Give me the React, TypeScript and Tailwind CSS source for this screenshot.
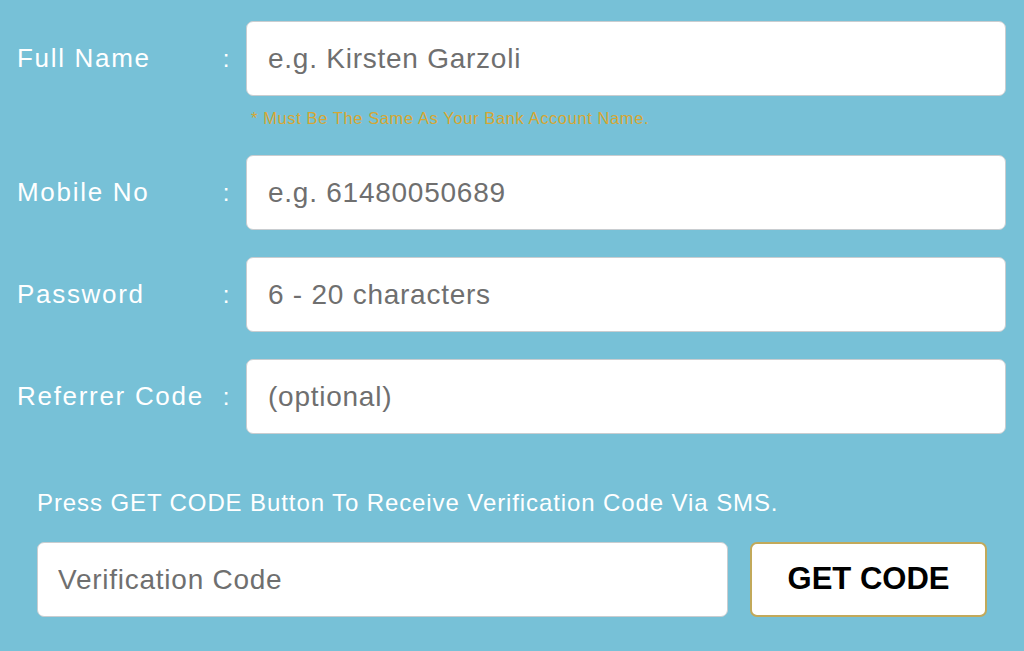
const fields = [
  { label: 'Full Name', placeholder: 'e.g. Kirsten Garzoli', hint: '* Must Be The Same As Your Bank Account Name.' },
  { label: 'Mobile No', placeholder: 'e.g. 61480050689' },
  { label: 'Password', placeholder: '6 - 20 characters' },
  { label: 'Referrer Code', placeholder: '(optional)' },
];

export default function App() {
  return (
    <div className="w-[1024px] h-[651px] bg-[#77c1d7] overflow-hidden font-['Liberation_Sans',Arial,sans-serif]">
      <div className="pt-[21px] pr-[18px] flex flex-col">
        {fields.map((f, i) => (
          <div key={f.label} className={i === 0 ? '' : 'mt-[27px]'}>
            <div className="flex items-center">
              <div className="w-[246px] shrink-0 flex items-center pl-[17px] pr-[15px] text-[26px] text-white tracking-[1.7px]">
                <span className="flex-1">{f.label}</span>
                <span className="text-[24px]">:</span>
              </div>
              <input
                placeholder={f.placeholder}
                className="flex-1 h-[75px] bg-white rounded-[7px] border border-[#c9cdd0] px-[21px] text-[28px] tracking-[0.75px] text-[#333] placeholder:text-[#6f6f6f] outline-none"
              />
            </div>
            {f.hint && (
              <p className="ml-[251px] mt-[12px] text-[16.5px] leading-[20px] tracking-[0.6px] text-[#d6a733]">{f.hint}</p>
            )}
          </div>
        ))}
      </div>

      <div className="px-[37px] mt-[55px]">
        <p className="text-[24px] leading-[28px] text-white tracking-[0.9px]">
          Press GET CODE Button To Receive Verification Code Via SMS.
        </p>
        <div className="flex gap-[22px] mt-[25px]">
          <input
            placeholder="Verification Code"
            className="w-[691px] h-[75px] bg-white rounded-[7px] border border-[#c9cdd0] px-[20px] text-[28px] tracking-[0.75px] text-[#333] placeholder:text-[#6f6f6f] outline-none"
          />
          <button className="w-[237px] h-[75px] bg-white rounded-[7px] border-2 border-[#c2a95a] text-[31px] font-bold text-black">
            GET CODE
          </button>
        </div>
      </div>
    </div>
  );
}
